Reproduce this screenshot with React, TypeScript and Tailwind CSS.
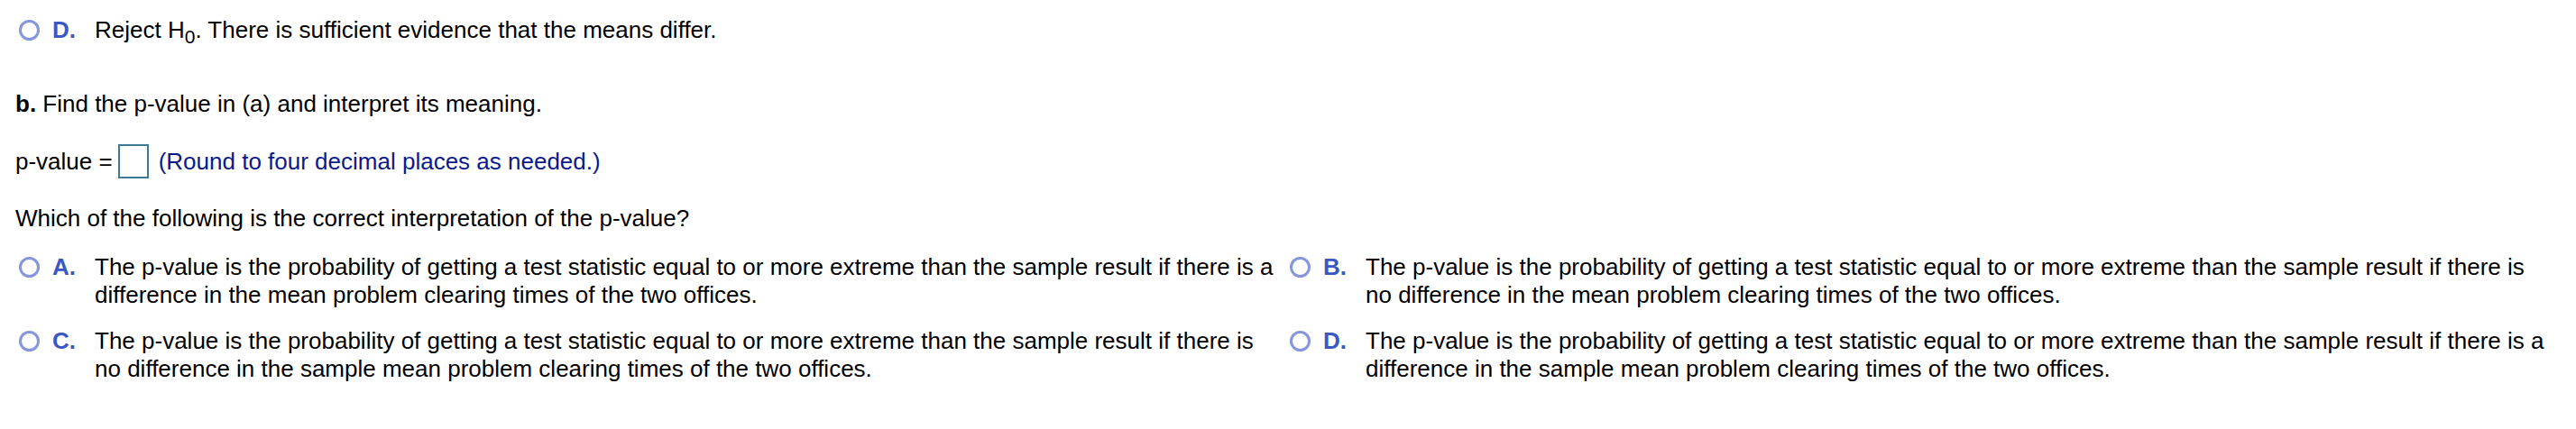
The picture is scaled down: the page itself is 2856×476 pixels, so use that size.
import React from 'react'

const options = [
  {
    key: 'A',
    lines: [
      'The p-value is the probability of getting a test statistic equal to or more extreme than the sample result if there is a',
      'difference in the mean problem clearing times of the two offices.',
    ],
  },
  {
    key: 'B',
    lines: [
      'The p-value is the probability of getting a test statistic equal to or more extreme than the sample result if there is',
      'no difference in the mean problem clearing times of the two offices.',
    ],
  },
  {
    key: 'C',
    lines: [
      'The p-value is the probability of getting a test statistic equal to or more extreme than the sample result if there is',
      'no difference in the sample mean problem clearing times of the two offices.',
    ],
  },
  {
    key: 'D',
    lines: [
      'The p-value is the probability of getting a test statistic equal to or more extreme than the sample result if there is a',
      'difference in the sample mean problem clearing times of the two offices.',
    ],
  },
]

function Radio() {
  return <span className="mt-[4px] ml-[4px] block h-[23px] w-[23px] shrink-0 rounded-full border-[3px] border-[#8596dd]" />
}

function Choice({ letter, children }: { letter: string; children: React.ReactNode }) {
  return (
    <div className="flex">
      <div className="flex w-[88px] shrink-0 items-start">
        <Radio />
        <span className="ml-[14px] font-bold text-[#3a57c4]">{letter}.</span>
      </div>
      <div className="min-w-0 flex-1">{children}</div>
    </div>
  )
}

export default function App() {
  return (
    <div
      className="min-h-[476px] bg-white px-[17px] pt-[18px] text-[26px] leading-[31px] text-black"
      style={{ fontFamily: '"Liberation Sans", Arial, sans-serif' }}
    >
      <Choice letter="D">
        Reject H<span className="align-[-6px] text-[21px] leading-none">0</span>. There is sufficient evidence that the means differ.
      </Choice>

      <p className="mt-[49px]">
        <span className="font-bold">b.</span> Find the p-value in (a) and interpret its meaning.
      </p>

      <div className="mt-[29px] flex h-[38px] items-center">
        <span>p-value =</span>
        <span className="ml-[6px] block h-[38px] w-[34px] border-[2.5px] border-[#3c7a98]" />
        <span className="ml-[11px] text-[#0a1a8c]">(Round to four decimal places as needed.)</span>
      </div>

      <p className="mt-[29px]">Which of the following is the correct interpretation of the p-value?</p>

      <div className="mt-[23px] grid grid-cols-[1409px_1fr] gap-y-[20px]">
        {options.map((o) => (
          <Choice key={o.key} letter={o.key}>
            {o.lines.map((line) => (
              <div key={line} className="whitespace-nowrap">
                {line}
              </div>
            ))}
          </Choice>
        ))}
      </div>
    </div>
  )
}
